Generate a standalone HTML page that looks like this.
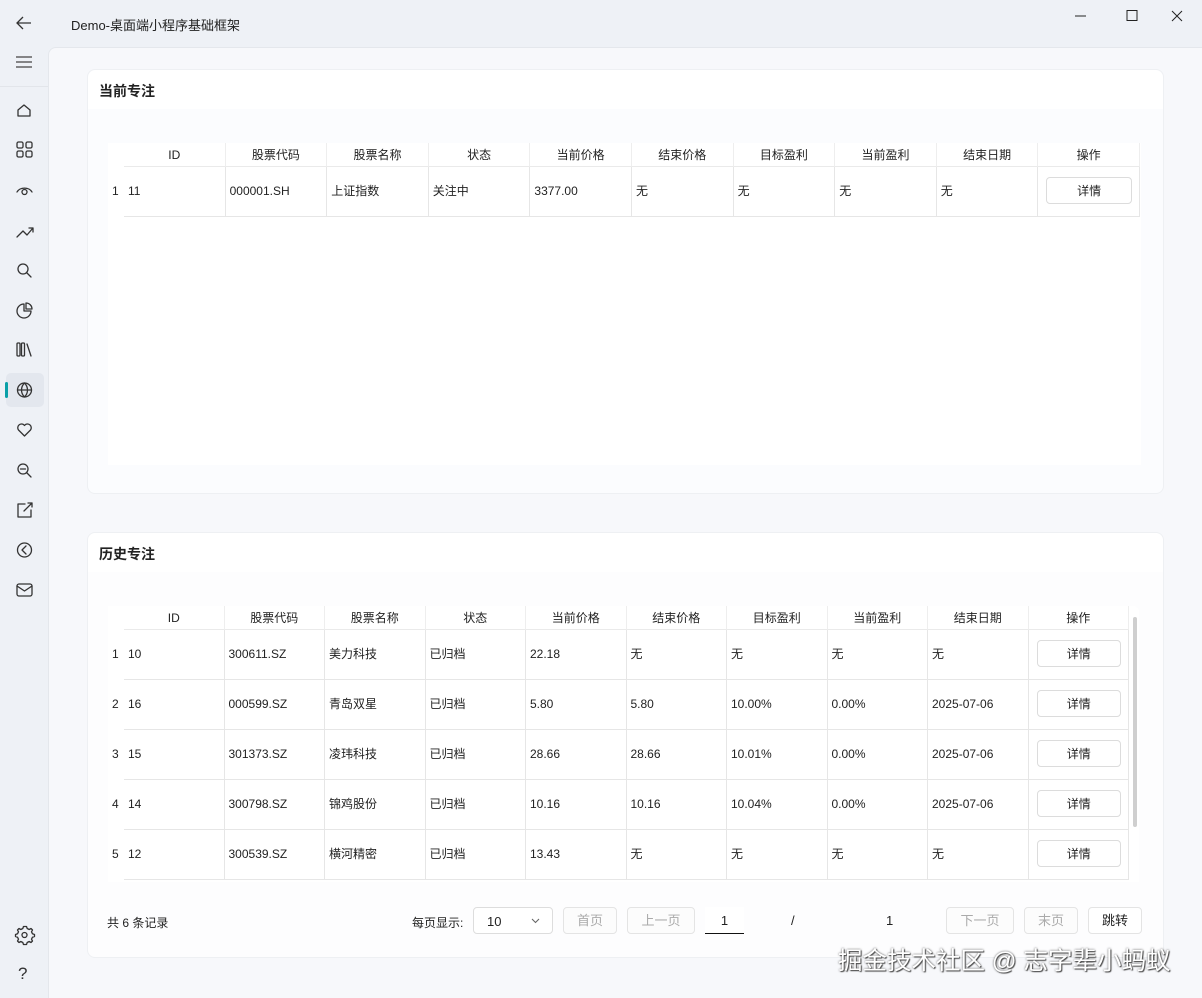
<!DOCTYPE html>
<html><head><meta charset="utf-8"><style>
*{box-sizing:border-box;margin:0;padding:0}
body{width:1202px;height:998px;overflow:hidden;background:#eef1f6;font-family:"Liberation Sans","Noto Sans CJK SC",sans-serif;font-size:12px;color:#222;position:relative}
.abs{position:absolute}
.main{left:48px;top:47px;width:1154px;height:951px;background:#f7f8fb;border-top-left-radius:8px;border-top:1px solid #e4e7ec;border-left:1px solid #e4e7ec}
.card{left:87px;width:1077px;background:#fbfcfe;border:1px solid #eef0f3;border-radius:8px}
.ch{position:absolute;left:0;top:0;right:0;height:39px;background:#fff;border-radius:8px 8px 0 0;font-size:14px;font-weight:bold;padding:11px 0 0 11px}
.tbl{position:absolute;background:#fff}
.cell{position:absolute;border-right:1px solid #e6e6e6;border-bottom:1px solid #e6e6e6;padding-left:4px;display:flex;align-items:center}
.hd{justify-content:center;padding:0;border-bottom:1px solid #eaeaea;border-right:1px solid #eee}
.btn{position:absolute;border:1px solid #dcdcdc;border-radius:4px;background:#fff;text-align:center;font-size:12px}
.pb{position:absolute;top:907px;height:27px;border:1px solid #e4e4e4;border-radius:4px;background:#fcfcfc;color:#aaa;text-align:center;line-height:25px;font-size:13px}
</style></head><body>
<svg class="abs" style="left:14px;top:13px" width="20" height="20" viewBox="0 0 20 20" fill="none" stroke="#333" stroke-width="1.3"><path d="M17 10H3M9 4L3 10l6 6"/></svg>
<div class="abs" style="left:71px;top:15px;font-size:13px">Demo-桌面端小程序基础框架</div>
<svg class="abs" style="left:1075px;top:8px" width="120" height="16" viewBox="0 0 120 16" fill="none" stroke="#222" stroke-width="1"><path d="M0 8h11"/><path d="M52 2.5h10v10h-10z"/><path d="M97 3l10 10M107 3L97 13"/></svg>
<svg class="abs" style="left:15px;top:54px" width="20" height="16" fill="none" stroke="#444" stroke-width="1.3"><path d="M1 3h16M1 8h16M1 13h16"/></svg>
<div class="abs" style="left:0;top:86px;width:48px;border-top:1px solid #e2e5ea"></div>
<div class="abs" style="left:6px;top:373px;width:38px;height:34px;background:#e3e7ee;border-radius:5px"></div>
<div class="abs" style="left:5px;top:382px;width:3px;height:16px;background:#0aa0a8;border-radius:2px"></div>
<svg class="abs" style="left:0;top:0" width="48" height="998" fill="none" stroke="#333" stroke-width="1.3" stroke-linecap="round" stroke-linejoin="round">
<path d="M18 116v-6l6-5 6 5v6z"/>
<rect x="17" y="142" width="6" height="6" rx="1.5"/><rect x="26" y="142" width="6" height="6" rx="1.5"/><rect x="17" y="151" width="6" height="6" rx="1.5"/><rect x="26" y="151" width="6" height="6" rx="1.5"/>
<path d="M17 192a8 6 0 0 1 15 0"/><circle cx="24.5" cy="192" r="2.5"/>
<path d="M17 237l6-6 4 4 6-7M29 228h4v4"/>
<circle cx="23" cy="269" r="5"/><path d="M27 273l4 4"/>
<path d="M31 311a7 7 0 1 1-7-7v7z"/><path d="M26 303a6 6 0 0 1 6 6h-6z"/>
<rect x="17" y="343" width="3" height="13" rx="1"/><rect x="21.5" y="343" width="3" height="13" rx="1"/><path d="M27 344l4 12"/>
<circle cx="24.5" cy="390" r="7"/><path d="M17.5 390h14M24.5 383c-4 4-4 10 0 14M24.5 383c4 4 4 10 0 14"/>
<path d="M24.5 436l-6-6a3.7 3.7 0 0 1 6-4.5 3.7 3.7 0 0 1 6 4.5z"/>
<circle cx="23" cy="469" r="5"/><path d="M20.5 469h5M27 473l4 4"/>
<path d="M25 504h-7v13h13v-7M24 511l8-8M28 503h4v4"/>
<circle cx="24.5" cy="550" r="7"/><path d="M26 546l-4 4 4 4"/>
<rect x="17" y="584" width="15" height="12" rx="2"/><path d="M17 586l7.5 5 7.5-5"/>
<circle cx="24.5" cy="935" r="2.5"/><path d="M24.5 927.5l2 0 .7 2 2 1 1.8-1 1.5 1.5-1 1.8 1 2 2 .7v2l-2 .7-1 2 1 1.8-1.5 1.5-1.8-1-2 1-.7 2h-3l-.7-2-2-1-1.8 1-1.5-1.5 1-1.8-1-2-2-.7v-2l2-.7 1-2-1-1.8 1.5-1.5 1.8 1 2-1 .7-2z" transform="translate(0,-1)"/>
</svg>
<div class="abs" style="left:18px;top:964px;font-size:17px;color:#333">?</div>
<div class="abs main"></div>
<div class="abs card" style="top:69px;height:425px"><div class="ch">当前专注</div></div>
<div class="tbl" style="left:108px;top:143px;width:1033px;height:322px"></div>
<div id="t1"></div>
<div class="abs card" style="top:532px;height:426px;background:#fdfdfe"><div class="ch">历史专注</div></div>
<div class="tbl" style="left:108px;top:606px;width:1031px;height:276px;border-radius:0 6px 0 0"></div>
<div class="abs" style="left:1133px;top:617px;width:4px;height:210px;background:#cfcfcf;border-radius:2px"></div>
<div id="t2"></div>
<div class="abs" style="left:107px;top:914px;font-size:12px">共 6 条记录</div>
<div class="abs" style="left:412px;top:914px;font-size:12px">每页显示:</div>
<div class="abs" style="left:473px;top:907px;width:80px;height:27px;border:1px solid #ddd;border-radius:4px;background:#fff;padding:6px 0 0 13px;font-size:13px">10<svg style="position:absolute;right:12px;top:10px" width="9" height="6" fill="none" stroke="#666" stroke-width="1.1"><path d="M1 1l3.5 3.5L8 1"/></svg></div>
<div class="pb" style="left:563px;width:54px">首页</div>
<div class="pb" style="left:627px;width:68px">上一页</div>
<div class="abs" style="left:705px;top:907px;width:39px;height:27px;border-bottom:1.5px solid #111;background:#fff;text-align:center;line-height:27px;font-size:13px">1</div>
<div class="abs" style="left:791px;top:913px;font-size:13px">/</div>
<div class="abs" style="left:886px;top:913px;font-size:13px">1</div>
<div class="pb" style="left:946px;width:68px">下一页</div>
<div class="pb" style="left:1024px;width:54px">末页</div>
<div class="pb" style="left:1088px;width:54px;color:#222;background:#fff">跳转</div>
<div class="abs" style="left:838px;top:942px;font-size:24.5px;color:#fff;white-space:nowrap;text-shadow:0 0 2px #555,1px 1px 1px #444">掘金技术社区 @ 志字辈小蚂蚁</div>
<script>
const H=["ID","股票代码","股票名称","状态","当前价格","结束价格","目标盈利","当前盈利","结束日期","操作"];
function build(id,x0,top,cw,rows){
 let h="";
 H.forEach((t,i)=>{h+=`<div class="cell hd" style="left:${x0+i*cw}px;top:${top}px;width:${cw}px;height:24px">${t}</div>`});
 rows.forEach((r,j)=>{
  const y=top+24+j*50;
  h+=`<div class="abs" style="left:112px;top:${y+17}px;font-size:12px">${j+1}</div>`;
  r.forEach((t,i)=>{h+=`<div class="cell" style="left:${x0+i*cw}px;top:${y}px;width:${cw}px;height:50px;padding-bottom:2px">${t}</div>`});
  h+=`<div class="cell" style="left:${x0+9*cw}px;top:${y}px;width:${cw}px;height:50px"></div>`;
  h+=`<div class="btn" style="left:${x0+9*cw+8}px;top:${y+10}px;width:${cw-16}px;height:27px;line-height:27px">详情</div>`;
 });
 document.getElementById(id).innerHTML=h;
}
build("t1",124,143,101.6,[["11","000001.SH","上证指数","关注中","3377.00","无","无","无","无"]]);
build("t2",124,606,100.5,[
["10","300611.SZ","美力科技","已归档","22.18","无","无","无","无"],
["16","000599.SZ","青岛双星","已归档","5.80","5.80","10.00%","0.00%","2025-07-06"],
["15","301373.SZ","凌玮科技","已归档","28.66","28.66","10.01%","0.00%","2025-07-06"],
["14","300798.SZ","锦鸡股份","已归档","10.16","10.16","10.04%","0.00%","2025-07-06"],
["12","300539.SZ","横河精密","已归档","13.43","无","无","无","无"]]);
</script>
</body></html>
